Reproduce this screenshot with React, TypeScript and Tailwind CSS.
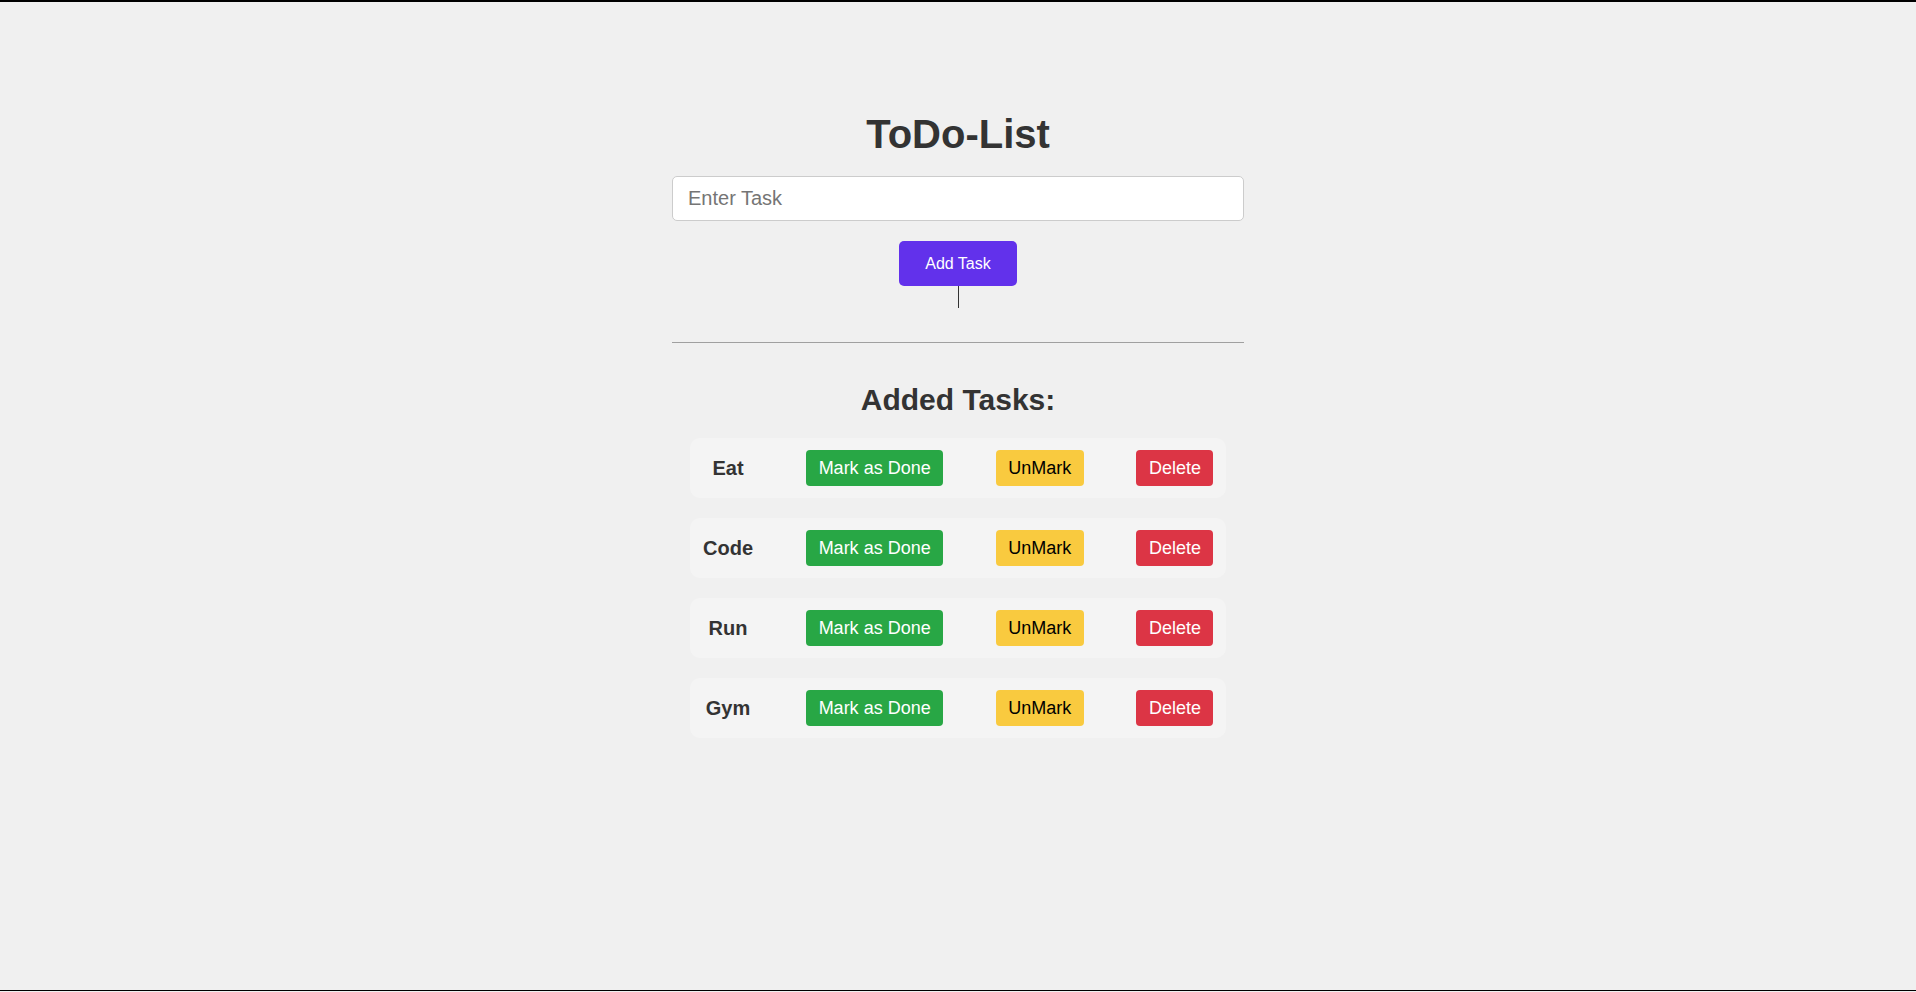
import { useState } from 'react';

type Task = { id: number; name: string; done: boolean };

const initialTasks: Task[] = [
  { id: 1, name: 'Eat', done: false },
  { id: 2, name: 'Code', done: false },
  { id: 3, name: 'Run', done: false },
  { id: 4, name: 'Gym', done: false },
];

export default function App() {
  const [tasks, setTasks] = useState<Task[]>(initialTasks);
  const [text, setText] = useState('');

  const addTask = () => {
    if (!text.trim()) return;
    setTasks([...tasks, { id: Date.now(), name: text.trim(), done: false }]);
    setText('');
  };

  const setDone = (id: number, done: boolean) =>
    setTasks(tasks.map((t) => (t.id === id ? { ...t, done } : t)));

  const remove = (id: number) => setTasks(tasks.filter((t) => t.id !== id));

  return (
    <div className="min-h-[992px] flex flex-col bg-[#f0f0f0] text-[#333] font-['Liberation_Sans',Arial,sans-serif]">
      <div className="h-[2px] bg-black" />

      <main className="flex-1 w-[572px] mx-auto flex flex-col items-stretch">
        {/* Header */}
        <h1 className="mt-[109px] text-center text-[40px] leading-[46px] font-bold">ToDo-List</h1>

        <input
          type="text"
          value={text}
          onChange={(e) => setText(e.target.value)}
          placeholder="Enter Task"
          className="mt-[19px] h-[45px] w-full bg-white border border-[#cccccc] rounded-[5px] pl-[15px] text-[20px] text-[#333] placeholder:text-[#757575] outline-none"
        />

        <button
          onClick={addTask}
          className="mt-[20px] self-center h-[45px] px-[26px] bg-[#6231eb] text-white text-[16px] rounded-[5px]"
        >
          Add Task
        </button>
        <div className="self-center w-px h-[22px] bg-[#333]" />

        <hr className="mt-[34px] border-0 h-px bg-[#a0a0a0]" />

        {/* Task list */}
        <h2 className="mt-[40px] text-center text-[30px] leading-[34px] font-bold">Added Tasks:</h2>

        <ul className="mt-[21px] mx-[18px] flex flex-col gap-[20px]">
          {tasks.map((t) => (
            <li
              key={t.id}
              className="h-[60px] flex items-center justify-between px-[12.5px] bg-[#f4f4f4] rounded-[10px]"
            >
              <span
                className={`w-[51px] text-center text-[20px] font-bold ${t.done ? 'line-through' : ''}`}
              >
                {t.name}
              </span>
              <button
                onClick={() => setDone(t.id, true)}
                className="h-[36px] px-[12.5px] bg-[#28a745] text-white text-[18px] rounded-[4px]"
              >
                Mark as Done
              </button>
              <button
                onClick={() => setDone(t.id, false)}
                className="h-[36px] px-[12.5px] bg-[#f9ca3f] text-black text-[18px] rounded-[4px]"
              >
                UnMark
              </button>
              <button
                onClick={() => remove(t.id)}
                className="h-[36px] px-[12.5px] bg-[#dc3545] text-white text-[18px] rounded-[4px]"
              >
                Delete
              </button>
            </li>
          ))}
        </ul>
      </main>

      <div className="h-px bg-black" />
      <div className="h-px" />
    </div>
  );
}
